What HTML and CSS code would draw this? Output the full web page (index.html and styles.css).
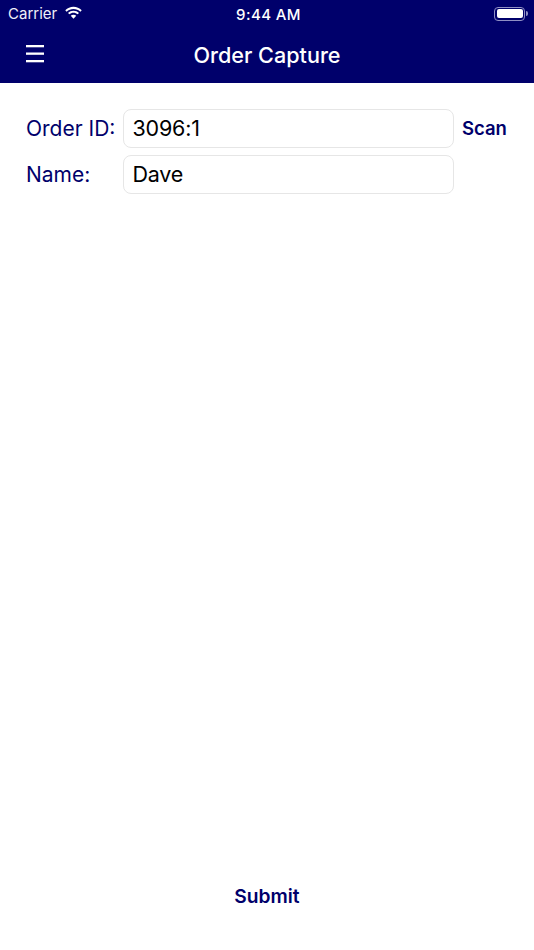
FILE: index.html
```html
<!DOCTYPE html>
<html lang="en">
<head>
<meta charset="utf-8">
<title>Order Capture</title>
<link rel="stylesheet" href="styles.css">
</head>
<body>
<div class="app">
  <header class="header">
    <div class="status">
      <div class="status-left">
        <span class="carrier">Carrier</span>
        <svg class="wifi" width="19" height="14" viewBox="0 0 18 13"><path d="M9 2.600c2.500 0 4.800 1 6.500 2.600l1.300-1.400C14.700 1.800 12 .6 9 .6S3.300 1.800 1.200 3.800l1.300 1.400C4.200 3.600 6.500 2.600 9 2.600z" fill="#fff"/><path d="M9 6.300c1.500 0 2.900.6 3.900 1.500l1.300-1.400C12.800 5.100 11 4.400 9 4.400s-3.800.7-5.200 2l1.300 1.400c1-.9 2.400-1.500 3.900-1.500z" fill="#fff"/><path d="M9 8.200c-1 0-1.900.4-2.600 1L9 12l2.600-2.800c-.7-.6-1.600-1-2.600-1z" fill="#fff"/></svg>
      </div>
      <span class="time">9:44 AM</span>
      <div class="battery"><div class="battery-shell"><div class="battery-fill"></div></div><div class="battery-cap"></div></div>
    </div>
    <div class="nav">
      <svg class="menu" width="18" height="18" viewBox="0 0 18 18"><rect y="0" width="18" height="2.300" fill="#fff"/><rect y="7.500" width="18" height="2.300" fill="#fff"/><rect y="15" width="18" height="2.300" fill="#fff"/></svg>
      <h1 class="title">Order Capture</h1>
    </div>
  </header>
  <main class="form">
    <div class="row">
      <label class="label">Order ID:</label>
      <div class="field">3096:1</div>
      <span class="action">Scan</span>
    </div>
    <div class="row">
      <label class="label">Name:</label>
      <div class="field">Dave</div>
    </div>
  </main>
  <footer class="footer"><span class="submit">Submit</span></footer>
</div>
</body>
</html>
```
FILE: styles.css
```css
* { box-sizing: border-box; }
html, body { margin: 0; padding: 0; background: #fff; }
body { width: 534px; height: 950px; overflow: hidden; font-family: Inter, "Liberation Sans", sans-serif; }
.app { display: flex; flex-direction: column; height: 950px; }
.header { background: #00006b; color: #fff; height: 83px; flex: none; }
.status { display: flex; align-items: center; justify-content: space-between; height: 28px; padding: 0 6px 0 8px; position: relative; font-size: 15px; }
.status-left { display: flex; align-items: center; gap: 7px; color: #f0f0f8; }
.carrier { margin-top: -2px; }
.wifi { margin-top: -3px; }
.time { position: absolute; left: 3px; right: 0; text-align: center; font-weight: 500; letter-spacing: 0.4px; }
.battery { display: flex; align-items: center; margin-top: -1px; }
.battery-shell { width: 31px; height: 14px; border: 1px solid #8f8fc4; border-radius: 4px; padding: 1.500px; }
.battery-fill { height: 100%; background: #fff; border-radius: 2px; }
.battery-cap { width: 2px; height: 5px; background: #8f8fc4; border-radius: 0 2px 2px 0; margin-left: 1px; }
.nav { display: flex; align-items: center; justify-content: center; height: 55px; padding-bottom: 2px; position: relative; }
.menu { position: absolute; left: 26px; top: 17px; }
.title { margin: 0; font-size: 21.600px; font-weight: 500; color: #fff; }
.form { flex: 1; display: flex; flex-direction: column; gap: 7.500px; padding: 25.500px 0 0 26px; }
.row { display: flex; align-items: center; height: 39px; }
.label { width: 97px; flex: none; font-size: 21px; color: #00006b; }
.field { width: 331px; height: 39px; flex: none; border: 1px solid #e6e6e6; border-radius: 8px; padding-left: 8.500px; font-size: 21.500px; letter-spacing: -0.200px; line-height: 36px; color: #000; }
.action { margin-left: 8px; font-size: 18.500px; font-weight: 600; color: #00006b; }
.footer { flex: none; height: 118px; display: flex; justify-content: center; padding-top: 52px; }
.submit { font-size: 19.200px; font-weight: 600; color: #00006b; line-height: 24px; height: 24px; }
```
